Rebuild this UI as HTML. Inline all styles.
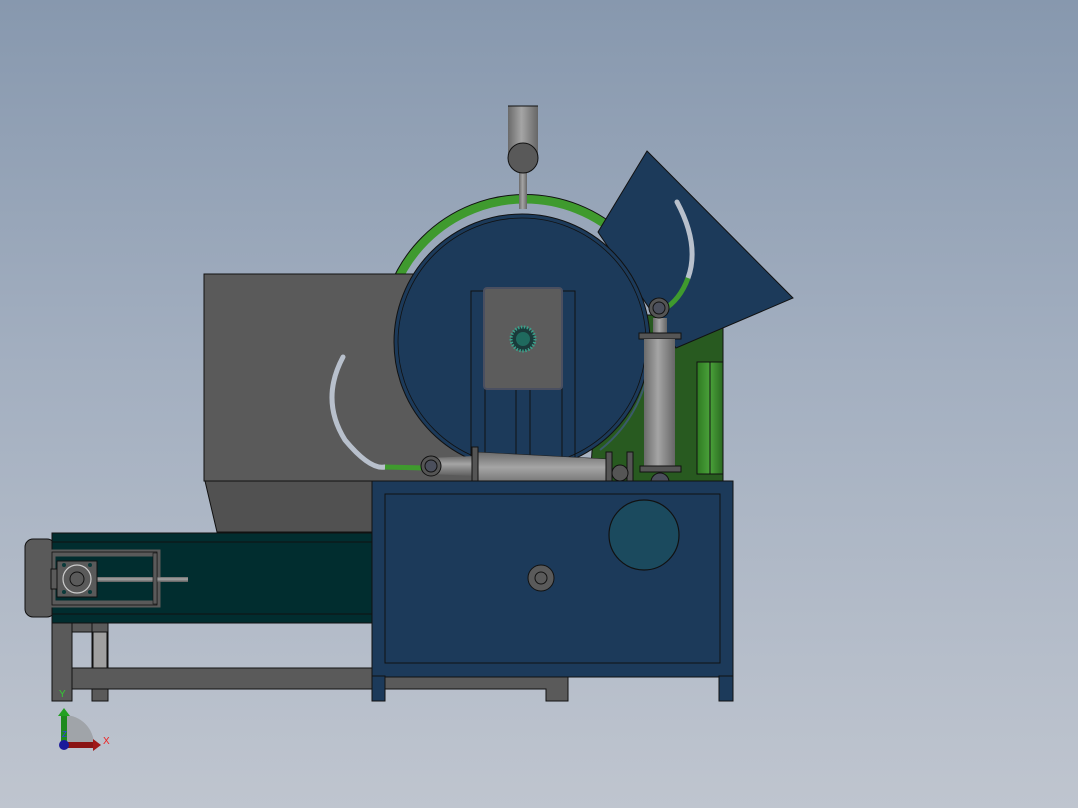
<!DOCTYPE html>
<html><head><meta charset="utf-8"><style>
html,body{margin:0;padding:0;width:1078px;height:808px;overflow:hidden}
body{background:linear-gradient(180deg,#8798ae 0%,#a3afc0 45%,#bfc5cf 100%)}
svg{display:block}
text{font-family:"Liberation Sans",sans-serif}
</style></head><body>
<svg width="1078" height="808" viewBox="0 0 1078 808" xmlns="http://www.w3.org/2000/svg">
<defs>
<linearGradient id="cyl" x1="0" x2="1" y1="0" y2="0"><stop offset="0" stop-color="#6a6a6a"/><stop offset="0.45" stop-color="#a5a5a5"/><stop offset="1" stop-color="#666"/></linearGradient>
<linearGradient id="cylh" x1="0" x2="0" y1="0" y2="1"><stop offset="0" stop-color="#6a6a6a"/><stop offset="0.4" stop-color="#a5a5a5"/><stop offset="1" stop-color="#5e5e5e"/></linearGradient>
<linearGradient id="grn" x1="0" x2="1"><stop offset="0" stop-color="#2f7a22"/><stop offset="0.5" stop-color="#4aa23a"/><stop offset="1" stop-color="#2a6a20"/></linearGradient>
</defs>
<!-- green ring -->
<circle cx="525" cy="340" r="141" fill="none" stroke="#3f9a2e" stroke-width="9"/>
<circle cx="525" cy="340" r="145.5" fill="none" stroke="#111" stroke-width="1"/>
<!-- green body behind -->
<polygon points="600,330 640,315 723,315 723,482 590,482" fill="#285a20" stroke="#111" stroke-width="1"/>
<rect x="697" y="362" width="26" height="112" fill="url(#grn)" stroke="#111"/>
<line x1="710" y1="362" x2="710" y2="474" stroke="#111"/>
<!-- blue triangle -->
<polygon points="647,151 793,298 676,348 598,232" fill="#1c3a5a" stroke="#111" stroke-width="1"/>
<path d="M677,202 Q700,245 688,278" stroke="#b8c0cc" stroke-width="5" fill="none" stroke-linecap="round"/>
<path d="M688,278 Q680,300 663,310" stroke="#3f9a2e" stroke-width="5" fill="none"/>
<!-- hopper -->
<rect x="204" y="274" width="280" height="207" fill="#5a5a5a" stroke="#111"/>
<polygon points="205,481 372,481 372,532 217,532" fill="#515151" stroke="#111"/>
<path d="M343,357 Q320,400 345,440 Q370,470 385,467" stroke="#b8c0cc" stroke-width="5" fill="none" stroke-linecap="round"/>
<path d="M385,467 L425,468" stroke="#3f9a2e" stroke-width="5"/>
<!-- blue disc -->
<circle cx="522" cy="342" r="128" fill="#1c3a5a" stroke="#111" stroke-width="1"/>
<circle cx="522" cy="342" r="124" fill="none" stroke="#111" stroke-width="0.8"/>
<path d="M650,345 A130,130 0 0 1 600,450" fill="none" stroke="#3a5a6a" stroke-width="2"/>
<!-- frame lines -->
<rect x="471" y="291" width="104" height="180" fill="none" stroke="#111"/>
<line x1="485" y1="388" x2="485" y2="471" stroke="#111"/>
<line x1="562" y1="388" x2="562" y2="471" stroke="#111"/>
<line x1="516" y1="388" x2="516" y2="471" stroke="#111"/>
<line x1="530" y1="388" x2="530" y2="471" stroke="#111"/>
<rect x="484" y="288" width="78" height="101" rx="3" fill="#5c5c5c" stroke="#4a4f60" stroke-width="2"/>
<circle cx="523" cy="339" r="12" fill="#1a3a3a" stroke="#3aa08a" stroke-width="3" stroke-dasharray="1.5 1.5"/>
<circle cx="523" cy="339" r="7" fill="#1f6a5e"/>
<!-- top rod -->
<rect x="508" y="106" width="30" height="50" fill="url(#cyl)"/>
<line x1="508" y1="106" x2="538" y2="106" stroke="#111"/>
<rect x="519" y="172" width="8" height="37" fill="url(#cyl)"/>
<circle cx="523" cy="158" r="15" fill="#595959" stroke="#111"/>
<!-- horizontal cylinder -->
<polygon points="430,458 475,456 475,476 430,474" fill="url(#cylh)"/>
<polygon points="476,452 608,459 608,490 476,486" fill="url(#cylh)" stroke="#222" stroke-width="0.6"/>
<rect x="472" y="447" width="6" height="42" fill="#555" stroke="#111"/>
<rect x="606" y="452" width="6" height="42" fill="#555" stroke="#111"/>
<rect x="627" y="452" width="6" height="42" fill="#555" stroke="#111"/>
<circle cx="620" cy="473" r="8" fill="#555" stroke="#111"/>
<circle cx="431" cy="466" r="10" fill="#555" stroke="#111"/>
<circle cx="431" cy="466" r="6" fill="#4b4f5c" stroke="#111"/>
<!-- vertical cylinder -->
<rect x="653" y="318" width="14" height="18" fill="url(#cyl)"/>
<circle cx="659" cy="308" r="10" fill="#555" stroke="#111"/>
<circle cx="659" cy="308" r="6" fill="#4b4f5c" stroke="#111"/>
<rect x="639" y="333" width="42" height="6" fill="#555" stroke="#111"/>
<rect x="644" y="339" width="31" height="128" fill="url(#cyl)"/>
<rect x="640" y="466" width="41" height="6" fill="#555" stroke="#111"/>
<circle cx="660" cy="482" r="9" fill="#4b4f5c" stroke="#111"/>
<!-- cabinet -->
<rect x="372" y="481" width="361" height="196" fill="#1c3a5a" stroke="#111"/>
<rect x="385" y="494" width="335" height="169" fill="#1c3a5a" stroke="#111"/>
<rect x="372" y="676" width="13" height="25" fill="#1c3a5a" stroke="#111"/>
<rect x="719" y="676" width="14" height="25" fill="#1c3a5a" stroke="#111"/>
<path d="M385,677 H568 V701 H546 V689 H385 Z" fill="#5a5a5a" stroke="#111"/>
<circle cx="644" cy="535" r="35" fill="#1b4a5e" stroke="#111" stroke-width="1.2"/>
<circle cx="541" cy="578" r="13" fill="#5a5a5a" stroke="#111"/>
<circle cx="541" cy="578" r="6" fill="none" stroke="#111"/>
<!-- lower frame -->
<rect x="52" y="622" width="20" height="79" fill="#5a5a5a" stroke="#111"/>
<rect x="92" y="622" width="16" height="79" fill="#5a5a5a" stroke="#111"/>
<rect x="93" y="632" width="14" height="36" fill="#a0a0a0" stroke="#111"/>
<rect x="72" y="668" width="300" height="21" fill="#5a5a5a" stroke="#111"/>
<rect x="72" y="622" width="20" height="10" fill="#5a5a5a" stroke="#111"/>
<!-- conveyor -->
<rect x="25" y="539" width="30" height="78" rx="8" fill="#5a5a5a" stroke="#111"/>
<rect x="52" y="533" width="320" height="90" fill="#012d2f" stroke="#111"/>
<line x1="52" y1="542" x2="372" y2="542" stroke="#111"/>
<line x1="52" y1="614" x2="372" y2="614" stroke="#111"/>
<rect x="52" y="553" width="105" height="51" fill="none" stroke="#5a5a5a" stroke-width="7"/>
<rect x="52" y="552" width="105" height="53" fill="none" stroke="#111" stroke-width="0.8"/>
<rect x="97" y="577" width="91" height="5" fill="url(#cylh)"/>
<rect x="153" y="553" width="4" height="51" fill="#5a5a5a" stroke="#111" stroke-width="0.6"/>
<rect x="57" y="561" width="40" height="36" fill="#5a5a5a" stroke="#111"/>
<circle cx="77" cy="579" r="14" fill="#5a5a5a" stroke="#ccc" stroke-width="1.2"/>
<circle cx="77" cy="579" r="7" fill="none" stroke="#111"/>
<circle cx="64" cy="565" r="2" fill="#0a3a3a"/><circle cx="90" cy="565" r="2" fill="#0a3a3a"/>
<circle cx="64" cy="592" r="2" fill="#0a3a3a"/><circle cx="90" cy="592" r="2" fill="#0a3a3a"/>
<rect x="51" y="569" width="6" height="20" fill="#5a5a5a" stroke="#111"/>
<!-- axes -->
<path d="M64,745 L64,715 A30,30 0 0 1 94,745 Z" fill="#9a9ca0" opacity="0.8"/>
<rect x="61" y="714" width="6" height="30" fill="#1d8a1d"/>
<polygon points="58,716 64,708 70,716" fill="#22a022"/>
<rect x="64" y="742" width="30" height="6" fill="#8a1414"/>
<polygon points="93,739 101,745 93,751" fill="#a01818"/>
<circle cx="64" cy="745" r="5" fill="#1a1a9a"/>
<text x="59" y="697" font-size="10" fill="#3c3">Y</text>
<text x="103" y="744" font-size="10" fill="#e22">X</text>
<text x="62" y="737" font-size="8" fill="#33f">Z</text>
</svg>
</body></html>
